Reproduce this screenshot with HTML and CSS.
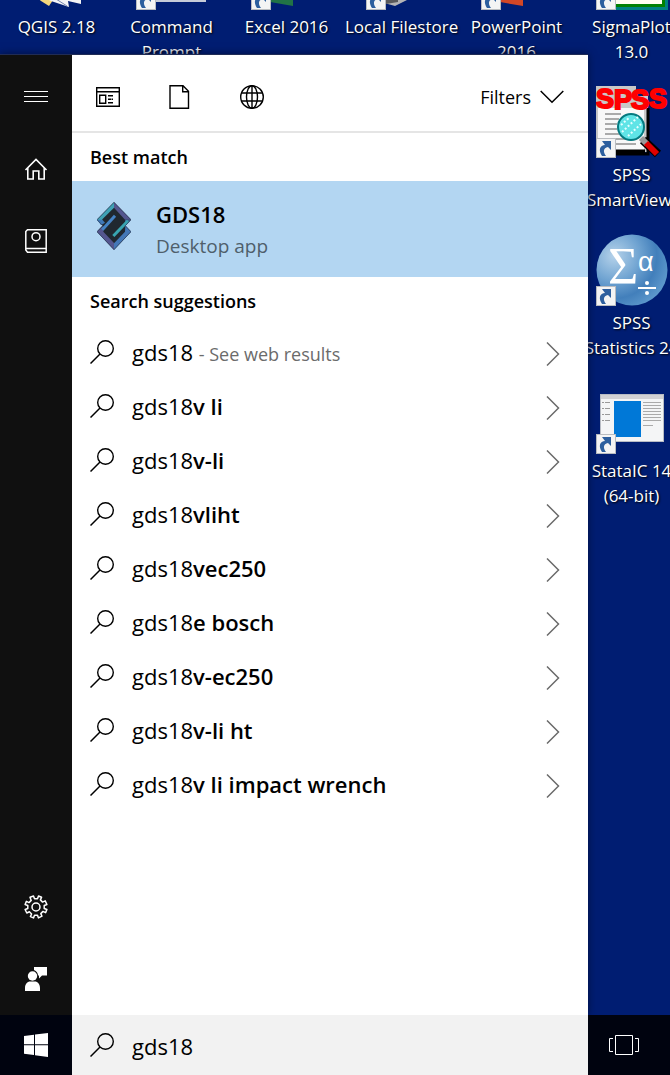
FILE: index.html
```html
<!DOCTYPE html>
<html lang="en">
<head>
<meta charset="utf-8">
<title>Search</title>
<link rel="stylesheet" href="styles.css">
</head>
<body>
<svg class="defs" aria-hidden="true">
  <symbol id="shortcut" viewBox="0 0 20 20">
    <path d="M0 0h20v20H0z" fill="#b9bcc0"/><path d="M1 1h18v18H1z" fill="#f4f4f4"/>
    <path d="M6 18C2 12 4 7 9 7L6 3h9v9l-3-3c-5 1-5 5-2 9z" fill="#2d5f9e"/>
  </symbol>
  <symbol id="search" viewBox="0 0 24 24">
    <circle cx="15.500" cy="8.500" r="7.800" fill="none" stroke="currentColor" stroke-width="1.400"/>
    <path d="M10 14L.5 23.500" stroke="currentColor" stroke-width="1.500"/>
  </symbol>
  <symbol id="next" viewBox="0 0 14 24">
    <path d="M1 .5L12.500 12 1 23.500" fill="none" stroke="currentColor" stroke-width="1.500"/>
  </symbol>
</svg>

<div class="screen">
  <div class="desktop">
    <a class="shortcut" href="#qgis">
      <svg viewBox="0 0 72 72"><path d="M14 58l18 0 0 4-4 6-8-5z" fill="#f5d77c"/><path d="M24 60h36v6l-13-3 1 6-18-6z" fill="#f3f3f5"/><path d="M35 61l11 7" stroke="#7785ae"/></svg>
      <span>QGIS 2.18</span></a>
    <a class="shortcut" href="#cmd">
      <svg viewBox="0 0 72 72"><path d="M2 8h68v56H2z" fill="#c5cbd8"/><path d="M5 14h62v46H5z" fill="#111"/><use href="#shortcut" y="52" width="20" height="20"/></svg>
      <span>Command<br>Prompt</span></a>
    <a class="shortcut" href="#excel">
      <svg viewBox="0 0 72 72"><path d="M2 8l40-6v66L2 61z" fill="#217346"/><use href="#shortcut" y="52" width="20" height="20"/></svg>
      <span>Excel 2016</span></a>
    <a class="shortcut" href="#filestore">
      <svg viewBox="0 0 72 72"><path d="M4 20L45 8v52l-16 8-25-7z" fill="#b4b4b6"/><path d="M4 20l28 8v36l-12 2z" fill="#59595b"/><use href="#shortcut" y="52" width="20" height="20"/></svg>
      <span>Local Filestore</span></a>
    <a class="shortcut" href="#powerpoint">
      <svg viewBox="0 0 72 72"><path d="M2 8l40-6v66L2 61z" fill="#d24726"/><use href="#shortcut" y="52" width="20" height="20"/></svg>
      <span>PowerPoint<br>2016</span></a>
    <a class="shortcut" href="#sigmaplot">
      <svg viewBox="0 0 72 72"><path d="M0 0h72v72H0z" fill="#008080"/><path d="M3 3h66v66H3z" fill="#008000"/><path d="M6 6h60v60H6z" fill="#fffdf0"/><use href="#shortcut" y="52" width="20" height="20"/></svg>
      <span>SigmaPlot<br>13.0</span></a>
    <a class="shortcut last" href="#smartviewer">
      <svg viewBox="0 0 72 72">
        <path d="M0 0h40v10h12v56H0z" fill="#c8c8c8"/><path d="M2 22h46v42H2z" fill="#f8f8f8"/><path d="M20 68h32V22M20 65h29" fill="none" stroke="#000" stroke-width="3"/>
        <path d="M9 28h16M9 33h14M9 38h12M9 43h12M9 48h14M20 53h10M20 58h20" stroke="#aaa" stroke-width="2"/>
        <path d="M47 54l15 14" stroke="#000" stroke-width="9"/><path d="M45 52l6 6" stroke="#999" stroke-width="6"/><path d="M50 57l11 11" stroke="#e00000" stroke-width="6"/>
        <circle cx="35" cy="41" r="13" fill="#5fe4e6" stroke="#057a80" stroke-width="2"/><path d="M25 39l9-8M26 46l16-15M32 50l13-12" stroke="#e4ffff" stroke-width="2" stroke-dasharray="2 2"/>
        <text class="spss-mark" x="0 18 35 53" y="22 23 23 22">SPSS</text>
        <use href="#shortcut" y="52" width="20" height="20"/>
      </svg>
      <span>SPSS<br>SmartView.</span></a>
    <a class="shortcut last" href="#statistics">
      <svg viewBox="0 0 72 72">
        <defs><radialGradient id="ball" cx=".25" cy=".3" r=".8"><stop offset="0" stop-color="#b5d2ea"/><stop offset=".45" stop-color="#6fa3d1"/><stop offset=".75" stop-color="#427fbb"/><stop offset="1" stop-color="#5c97cb"/></radialGradient></defs>
        <circle cx="36" cy="36" r="35.500" fill="url(#ball)"/>
        <text class="sigma" x="12" y="50">Σ</text><text class="alpha" x="42" y="37">α</text>
        <path d="M42 54h18" stroke="#fff" stroke-width="2"/><circle cx="51" cy="49" r="2" fill="#fff"/><circle cx="51" cy="59" r="2" fill="#fff"/>
        <use href="#shortcut" y="52" width="20" height="20"/>
      </svg>
      <span>SPSS<br>Statistics 24</span></a>
    <a class="shortcut last" href="#stata">
      <svg viewBox="0 0 72 72">
        <path d="M4 12h64v48H4z" fill="#b8bcc4"/><path d="M5 16h62v43H5z" fill="#f4f5f6"/><path d="M5 13h62v4H5z" fill="#d2d2d4"/>
        <path d="M18 19h27v36H18z" fill="#0078d7"/>
        <path d="M47 20.500h18M47 23.500h18M47 26.500h18M47 29.500h18M47 32.500h18M47 35.500h18M47 38.500h18M47 43.500h10" stroke="#aaa"/>
        <path d="M6 20.500h2m1 0h5M6 26.500h2m1 0h5M6 32.500h2m1 0h5M6 38.500h2m1 0h5" stroke="#999"/>
        <use href="#shortcut" y="52" width="20" height="20"/>
      </svg>
      <span>StataIC 14<br>(64-bit)</span></a>
  </div>

  <main class="menu">
    <nav class="rail" aria-label="Start">
      <button aria-label="Menu"><svg width="24" height="24" viewBox="0 0 24 24"><path d="M0 6.500h24M0 11.500h24M0 16.500h24" stroke="#fff"/></svg></button>
      <button aria-label="Home"><svg width="24" height="24" viewBox="0 0 24 24" fill="none" stroke="#fff" stroke-width="1.600"><path d="M1.500 13L12 2.500 22.500 13M3.800 11v11h5.400v-8h5.600v8h5.400V11"/></svg></button>
      <button aria-label="Notebook"><svg width="24" height="24" viewBox="0 0 24 24" fill="none" stroke="#fff" stroke-width="1.500"><path d="M3.500.8h18.700v22.400H3.500L1.800 21V2.500zM2 19.500h20"/><circle cx="12" cy="7.700" r="4"/></svg></button>
      <span class="spacer"></span>
      <button aria-label="Settings"><svg width="24" height="24" viewBox="0 0 24 24" fill="none" stroke="#fff" stroke-width="1.500" stroke-linejoin="round"><path d="M9.500 1l1 2.700h3l1-2.700 3.100 1.300-1.200 2.600 2.200 2.200 2.600-1.200L22.900 9.500l-2.700 1v3l2.700 1-1.300 3.100-2.600-1.200-2.200 2.200 1.200 2.600-3.500 1.700-1-2.700h-3l-1 2.700-3.100-1.300 1.200-2.600-2.200-2.200-2.600 1.200L1.100 14.500l2.700-1v-3l-2.700-1 1.300-3.100L5 7.600l2.200-2.200L6 2.300z"/><circle cx="12" cy="12" r="4"/></svg></button>
      <button aria-label="Feedback"><svg width="24" height="24" viewBox="0 0 24 24" fill="#fff"><circle cx="8.500" cy="9" r="4.700"/><path d="M1 24v-3c0-4 2.500-6.500 5-6.500h5c2.500 0 5 2.500 5 6.500v3zM10 0h13v8.500h-5L15 11.500V8.500h-1C14 6 12.500 4 10 3z"/></svg></button>
    </nav>

    <section class="results" aria-label="Search results">
      <div class="filters">
        <button class="scope" aria-label="Apps"><svg width="24" height="24" viewBox="0 0 24 24" fill="none" stroke="#000" stroke-width="1.400"><path d="M.7 2.700h22.600v18.600H.7zM.7 6.700h22.600M3.700 10.200h6v8h-6zM12 10.700h5M12 14.200h3.500M12 17.700h5M16 14.200h1"/></svg></button>
        <button class="scope" aria-label="Documents"><svg width="24" height="24" viewBox="0 0 24 24" fill="none" stroke="#000" stroke-width="1.400"><path d="M2 .7h13l5.500 5.500v17.100H2zM14.700.7v6h5.800"/></svg></button>
        <button class="scope" aria-label="Web"><svg width="24" height="24" viewBox="0 0 24 24" fill="none" stroke="#000" stroke-width="1.400"><circle cx="12" cy="12" r="11.300"/><ellipse cx="12" cy="12" rx="5.500" ry="11.300"/><path d="M12 .7v22.600M1.500 8h21M1.500 16h21"/></svg></button>
        <button class="filter-menu">Filters <svg width="24" height="14" viewBox="0 0 24 14"><path d="M.7 1L12 12.300 23.300 1" fill="none" stroke="#000" stroke-width="1.500"/></svg></button>
      </div>

      <h2>Best match</h2>
      <a class="best" href="#gds18">
        <svg width="34" height="48" viewBox="0 0 102 142">
          <path d="M51 0l51 52-17 18 17 18-51 54L0 88l17-18L0 52z" fill="#202830"/>
          <path d="M51 0v16L16 51l-4 14L0 52z" fill="#3fa1b4"/><path d="M51 0l51 52H84L51 16z" fill="#54568f"/>
          <path d="M84 52h18L85 70z" fill="#3b5f92"/><path d="M0 52h16l8 9-12 8z" fill="#3f78b8"/>
          <path d="M0 88l19-18v18l32 34v20z" fill="#54568f"/><path d="M51 142v-19l33-35 1-18 17 18z" fill="#4377b6"/>
          <path d="M16 82l38-42" fill="none" stroke="#4482c4" stroke-width="9"/>
          <path d="M49 101l44-46" stroke="#38a5b1" stroke-width="9"/>
          <path d="M51 0l51 52-17 18 17 18-51 54L0 88l17-18L0 52z" fill="none" stroke="#2b3854" stroke-width="2"/>
        </svg>
        <span class="best-text"><strong>GDS18</strong><small>Desktop app</small></span>
      </a>

      <h2>Search suggestions</h2>
      <ul class="suggestions">
        <li><a href="#1"><svg class="glass"><use href="#search"/></svg><span>gds18 <small>- See web results</small></span><svg class="next"><use href="#next"/></svg></a></li>
        <li><a href="#2"><svg class="glass"><use href="#search"/></svg><span>gds18<b>v li</b></span><svg class="next"><use href="#next"/></svg></a></li>
        <li><a href="#3"><svg class="glass"><use href="#search"/></svg><span>gds18<b>v-li</b></span><svg class="next"><use href="#next"/></svg></a></li>
        <li><a href="#4"><svg class="glass"><use href="#search"/></svg><span>gds18<b>vliht</b></span><svg class="next"><use href="#next"/></svg></a></li>
        <li><a href="#5"><svg class="glass"><use href="#search"/></svg><span>gds18<b>vec250</b></span><svg class="next"><use href="#next"/></svg></a></li>
        <li><a href="#6"><svg class="glass"><use href="#search"/></svg><span>gds18<b>e bosch</b></span><svg class="next"><use href="#next"/></svg></a></li>
        <li><a href="#7"><svg class="glass"><use href="#search"/></svg><span>gds18<b>v-ec250</b></span><svg class="next"><use href="#next"/></svg></a></li>
        <li><a href="#8"><svg class="glass"><use href="#search"/></svg><span>gds18<b>v-li ht</b></span><svg class="next"><use href="#next"/></svg></a></li>
        <li><a href="#9"><svg class="glass"><use href="#search"/></svg><span>gds18<b>v li impact wrench</b></span><svg class="next"><use href="#next"/></svg></a></li>
      </ul>
    </section>
  </main>

  <footer class="taskbar">
    <button class="start" aria-label="Start"><svg width="24" height="24" viewBox="0 0 24 24" fill="#fff"><path d="M0 3l10-1.300v9.600H0zM11 1.500L24 0v11.300H11zM0 12.300h10V22L0 20.700zM11 12.300h13V24l-13-1.700z"/></svg></button>
    <div class="searchbox">
      <label for="q" aria-label="Search"><svg class="glass"><use href="#search"/></svg></label>
      <input id="q" type="text" value="gds18">
    </div>
    <button class="taskview" aria-label="Task view"><svg width="30" height="20" viewBox="0 0 30 20" fill="none" stroke="#fff"><path d="M6.500.5h17v19h-17zM4 3.500H.5v13H4M26 3.500h3.500v13H26"/></svg></button>
  </footer>
</div>
</body>
</html>
```
FILE: styles.css
```css
* { box-sizing: border-box; }

body {
  margin: 0;
  font-family: "Open Sans", "Noto Sans", sans-serif;
  color: #000;
}

button {
  display: flex;
  align-items: center;
  justify-content: center;
  padding: 0;
  border: 0;
  background: none;
  font: inherit;
  color: inherit;
}

a { color: inherit; text-decoration: none; }

.defs { display: none; }

.screen {
  position: relative;
  display: flex;
  flex-direction: column;
  min-height: 100vh;
  padding-top: 54px;
  overflow: hidden;
  background: #001d72;
}

/* Desktop shortcuts, under the menu */
.desktop {
  position: absolute;
  inset: 0;
  display: grid;
  grid-template-columns: repeat(6, 115px);
  grid-auto-rows: 148px;
  margin-top: -62px;
}

.shortcut {
  color: #fff;
  font-size: 17px;
  line-height: 25px;
  text-align: center;
  text-shadow: 1px 1px 2px #000;
}

.shortcut.last { grid-column: 6; }

.shortcut svg {
  display: block;
  width: 72px;
  height: 72px;
  margin: 0 22px 4px 21px;
}

.shortcut span { display: block; padding-right: 2px; white-space: nowrap; }

.spss-mark {
  font: bold 27px "Liberation Sans", sans-serif;
  fill: #f00;
  stroke: #f00;
  stroke-width: 2px;
  text-shadow: none;
}

.sigma, .alpha { fill: #fff; text-shadow: none; }
.sigma { font-family: "Liberation Serif", serif; font-size: 52px; }
.alpha { font-family: "Liberation Sans", sans-serif; font-size: 27px; }

/* Menu */
.menu {
  position: relative;
  display: flex;
  flex: 1;
  margin-right: 82px;
  border-top: 1px solid #202c55;
  box-shadow: 0 0 8px #00103f;
}

.rail {
  display: flex;
  flex-direction: column;
  width: 72px;
  padding-top: 6px;
  background: #101010;
}

.rail button { height: 72px; }
.spacer { flex: 1; }

.results { flex: 1; min-width: 0; background: #fff; }

.filters {
  display: flex;
  height: 78px;
  padding: 8px 24px 0 0;
  border-bottom: 2px solid #e5e5e5;
}

.scope { width: 72px; }

.filter-menu { gap: 9px; margin-left: auto; font-size: 18px; }

h2 {
  margin: 0;
  padding: 0 18px;
  font-size: 18px;
  font-weight: 600;
  line-height: 48px;
}

.best {
  display: flex;
  align-items: center;
  gap: 25px;
  height: 96px;
  padding: 0 25px;
  background: #b3d6f2;
}

.best svg { margin-bottom: 6px; }
.best-text { display: flex; flex-direction: column; padding-top: 2px; }
.best strong { font-size: 22px; font-weight: 600; line-height: 32px; }
.best small { color: #4f5f6b; font-size: 19px; line-height: 32px; }

.suggestions { margin: 2px 0 0; padding: 0; list-style: none; }

.suggestions a {
  display: flex;
  align-items: center;
  height: 54px;
  padding: 0 28px 0 18px;
  font-size: 22px;
}

.suggestions span { flex: 1; margin-bottom: 4px; }
.suggestions b { font-weight: 600; }
.suggestions small { color: #6b6b6b; font-size: 18px; }

.glass { flex: none; width: 24px; height: 24px; margin: 0 18px 4px 0; }
.next { flex: none; width: 14px; height: 24px; color: #6b6b6b; }

/* Taskbar */
.taskbar { position: relative; display: flex; height: 60px; background: #00030f; }
.start { width: 72px; }
.taskview { width: 82px; padding-right: 10px; }

.searchbox {
  display: flex;
  flex: 1;
  align-items: center;
  min-width: 0;
  padding-left: 18px;
  background: #f2f2f2;
}

.searchbox label { display: flex; }
.searchbox .glass { margin-bottom: 0; }
.searchbox input {
  flex: 1;
  min-width: 0;
  padding: 2px 0 0;
  border: 0;
  outline: 0;
  background: none;
  font: inherit;
  font-size: 22px;
}
```
